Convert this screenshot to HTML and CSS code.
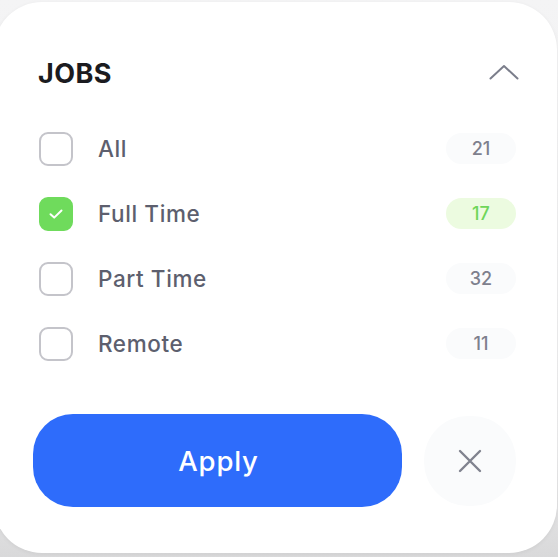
FILE: index.html
```html
<!DOCTYPE html>
<html>
<head>
<meta charset="utf-8">
<link rel="stylesheet" href="styles.css">
</head>
<body>
<div class="card">
  <div class="header">
    <h2 class="title">JOBS</h2>
    <svg class="chevron" width="30" height="16" viewBox="0 0 30 16"><path d="M1.5 14.5 L15 2 L28.5 14.5" fill="none" stroke="#7b7e8b" stroke-width="2" stroke-linecap="round" stroke-linejoin="round"/></svg>
  </div>
  <ul class="list">
    <li class="row">
      <span class="box"></span>
      <span class="label">All</span>
      <span class="count">21</span>
    </li>
    <li class="row">
      <span class="box checked"><svg width="16" height="12" viewBox="0 0 16 12"><path d="M2.5 6.2 L6.2 9.6 L13.5 2.5" fill="none" stroke="#fff" stroke-width="2" stroke-linecap="round" stroke-linejoin="round"/></svg></span>
      <span class="label">Full Time</span>
      <span class="count active">17</span>
    </li>
    <li class="row">
      <span class="box"></span>
      <span class="label">Part Time</span>
      <span class="count">32</span>
    </li>
    <li class="row">
      <span class="box"></span>
      <span class="label">Remote</span>
      <span class="count">11</span>
    </li>
  </ul>
  <div class="actions">
    <button class="apply">Apply</button>
    <button class="close"><svg width="24" height="24" viewBox="0 0 24 24"><path d="M2 2 L22 22 M22 2 L2 22" fill="none" stroke="#80838f" stroke-width="2.4" stroke-linecap="round"/></svg></button>
  </div>
</div>
</body>
</html>
```

FILE: styles.css
```css
* { box-sizing: border-box; }
html, body { margin: 0; padding: 0; }
body {
  width: 558px;
  height: 557px;
  background: linear-gradient(180deg, #f4f4f5 0%, #ececed 80%, #d9d9da 100%);
  font-family: "Inter", "Lato", sans-serif;
  overflow: hidden;
  padding: 2px 1px 0 0;
}
.card {
  margin-left: -6px;
  width: 563px;
  height: 551px;
  background: #fff;
  border-radius: 48px;
  box-shadow: 0 1px 4px rgba(0,0,0,0.06);
  padding: 51px 41px 0 44px;
}
.header {
  display: flex;
  align-items: center;
  justify-content: space-between;
  height: 40px;
}
.title {
  margin: 0;
  font-size: 27px;
  font-weight: 700;
  color: #1b1b20;
  letter-spacing: 0.4px;
}
.chevron { margin-right: -3px; margin-top: -2px; }
.list {
  list-style: none;
  margin: 23px 0 0;
  padding: 0 0 0 1px;
}
.row {
  display: flex;
  align-items: center;
  height: 65px;
}
.box {
  width: 34px;
  height: 34px;
  border: 2px solid #c4c4ca;
  border-radius: 9px;
  display: flex;
  align-items: center;
  justify-content: center;
  flex: none;
}
.box.checked {
  background: #6fdb5c;
  border-color: #6fdb5c;
}
.label {
  margin-left: 25px;
  font-size: 22.5px;
  font-weight: 500;
  color: #5d5f6e;
  letter-spacing: 0.6px;
  flex: 1;
}
.count {
  width: 70px;
  height: 31px;
  border-radius: 16px;
  background: #fafbfc;
  color: #7e808d;
  font-size: 18px;
  font-weight: 500;
  display: flex;
  align-items: center;
  justify-content: center;
}
.count.active {
  background: #ecfbe0;
  color: #6fd65a;
}
.actions {
  display: flex;
  align-items: center;
  gap: 22px;
  margin-top: 38px;
  margin-left: -5px;
}
.apply {
  width: 369px;
  height: 93px;
  border: none;
  border-radius: 40px;
  background: #2e6cfb;
  color: #fff;
  font-family: "Inter", "Lato", sans-serif;
  font-size: 27.5px;
  font-weight: 500;
  letter-spacing: 0.8px;
  padding-left: 8px;
}
.close {
  width: 92px;
  height: 90px;
  border: none;
  border-radius: 44px;
  background: #fafbfc;
  display: flex;
  align-items: center;
  justify-content: center;
}
```
